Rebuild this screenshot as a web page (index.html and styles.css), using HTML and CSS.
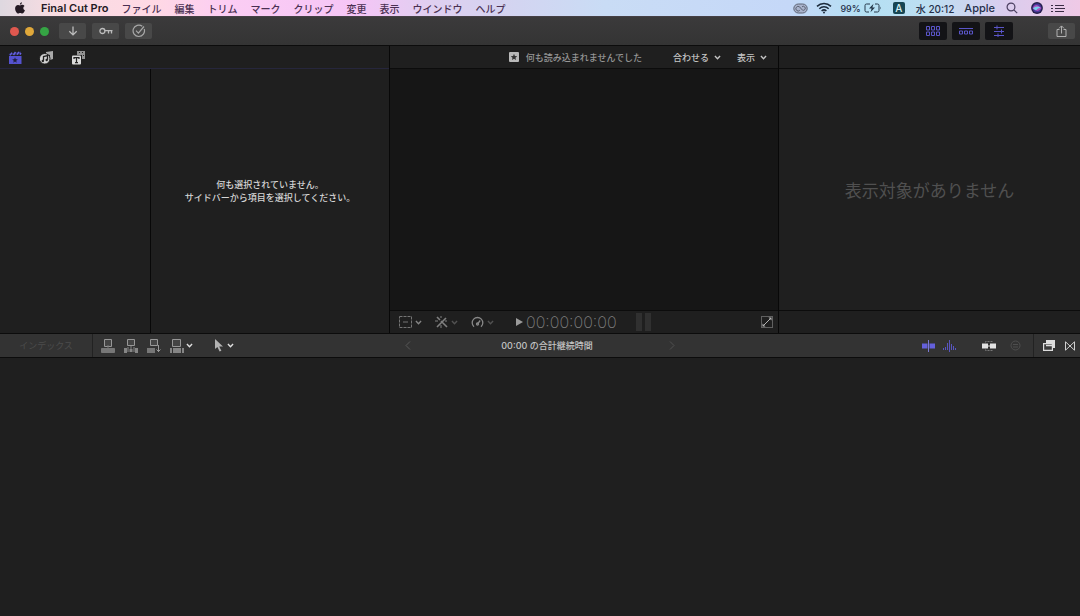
FILE: index.html
```html
<!DOCTYPE html>
<html lang="ja">
<head>
<meta charset="utf-8">
<title>Final Cut Pro</title>
<link rel="stylesheet" href="styles.css">
</head>
<body>
<svg class="defs" aria-hidden="true">
  <symbol id="chevron" viewBox="0 0 6 6"><path d="M.8 1.8 3 4.1 5.2 1.8" fill="none" stroke="currentColor" stroke-width="1.2"/></symbol>
  <symbol id="star" viewBox="0 0 10 10"><path d="M5 .5 6.3 3.6 9.7 3.9 7.1 6.1 7.9 9.4 5 7.6 2.1 9.4 2.9 6.1 .3 3.9 3.7 3.6Z"/></symbol>
</svg>

<header class="menubar">
  <nav class="menus">
    <button class="apple" aria-label="アップルメニュー"><svg width="10" height="12" viewBox="0 0 10 12"><path fill="#241a24" d="M6.9.2C7 1.500 6 2.600 4.900 2.600 4.800 1.400 5.800.4 6.900.2ZM5.100 3.400c.5 0 1.100-.6 2.200-.6.9 0 1.700.4 2.200 1.200C7.700 5.200 8 7.600 9.900 8.300 9.400 9.900 8.300 11.500 7.200 11.500c-.8 0-1.100-.5-2-.5s-1.300.5-2 .5C1.600 11.500.1 8.800.1 6.500c0-2.300 1.400-3.600 2.900-3.600.9 0 1.600.5 2.100.5Z"/></svg></button>
    <button class="app">Final Cut Pro</button>
    <button>ファイル</button>
    <button>編集</button>
    <button>トリム</button>
    <button>マーク</button>
    <button>クリップ</button>
    <button>変更</button>
    <button>表示</button>
    <button>ウインドウ</button>
    <button>ヘルプ</button>
  </nav>
  <div class="status">
    <svg width="15" height="11" viewBox="0 0 15 11" fill="none" stroke="#5d6475"><rect x=".8" y="1" width="13.400" height="9" rx="4.500" fill="#a9b3cc"/><path d="M6.800 7.300A2.300 2.300 0 1 1 6.500 3.800L9.400 7.100A2 2 0 1 0 9 3.800"/></svg>
    <svg class="wifi" width="16" height="12" viewBox="0 0 16 12" fill="none" stroke="#1c2b3c" stroke-width="1.500"><path d="M1 4.400C5 .5 11 .5 15 4.400M3.300 6.800c2.700-2.600 6.700-2.600 9.400 0M5.600 9c1.400-1.300 3.400-1.300 4.800 0"/><circle cx="8" cy="10.600" r="1" fill="#1c2b3c" stroke="none"/></svg>
    <span class="battery"><span>99%</span><svg width="18" height="10" viewBox="0 0 18 10"><path d="M6 1H2.500Q1 1 1 2.500v5Q1 9 2.500 9H5M11 1h2.500Q15 1 15 2.500v5Q15 9 13.500 9H10" fill="none" stroke="#26394a"/><path d="M16.200 3.500q1.400 1.500 0 3ZM9.500.8 5 5.600h2.600L6.500 9.300 11 4.400H8.400Z" fill="#26394a"/></svg></span>
    <span class="ime">A</span>
    <span class="clock">水 20:12</span>
    <span class="user">Apple</span>
    <svg class="search" width="12" height="12" viewBox="0 0 12 12" fill="none" stroke="#4a3f60" stroke-width="1.200"><circle cx="5" cy="5" r="3.900"/><path d="m7.800 7.800 3.400 3.400"/></svg>
    <svg class="siri" width="12" height="12" viewBox="0 0 12 12"><circle cx="6" cy="6" r="5.900" fill="#241d4a"/><circle cx="6" cy="6" r="4.500" fill="#493899"/><path d="M1.500 6Q4 1.500 7 3.500T10.500 6Q8 10 5 8.500T1.500 6Z" fill="#b04fc0"/><path d="M2 6.500Q5 3 9.500 5.500 6 6.500 5 8.500Z" fill="#77d0ee"/></svg>
    <svg class="list" width="14" height="9" viewBox="0 0 14 9" stroke="#3a2c44" stroke-width="1.200"><path d="M4 1.500h9M4 4.500h10M4 7.500h9M0 1.500h2M0 4.500h2M0 7.500h2"/></svg>
  </div>
</header>

<div class="toolbar">
  <div class="lights"><button class="close" aria-label="閉じる"></button><button class="minimize" aria-label="しまう"></button><button class="full" aria-label="拡大"></button></div>
  <div class="actions">
    <button class="tool" aria-label="読み込む"><svg width="10" height="10" viewBox="0 0 10 10" fill="none" stroke="#bcbcbc" stroke-width="1.300"><path d="M5 .5v8.300M1.300 5.200 5 8.900l3.700-3.700"/></svg></button>
    <button class="tool" aria-label="キーワード"><svg width="14" height="8" viewBox="0 0 14 8" fill="none" stroke="#bcbcbc" stroke-width="1.300"><circle cx="3.400" cy="4" r="2.500"/><path d="M6 3.600h7.500M9.500 4v2.500M12.500 4v2.500"/></svg></button>
    <button class="tool" aria-label="バックグラウンドタスク"><svg width="14" height="14" viewBox="0 0 14 14" fill="none" stroke="#a8a8a8" stroke-width="1.200"><path d="M12.200 5A5.700 5.700 0 1 1 10.300 2.300M4 6.700l2.400 2.400L12 2.500"/></svg></button>
  </div>
  <div class="views">
    <button class="tool on" aria-label="ブラウザ"><svg width="14" height="10" viewBox="0 0 14 10" fill="none" stroke="#5a55c8"><path d="M.5.5h3v3.500h-3ZM5.500.5h3v3.500h-3ZM10.500.5h3v3.500h-3ZM.5 6h3v3.500h-3ZM5.500 6h3v3.500h-3ZM10.500 6h3v3.500h-3Z"/></svg></button>
    <button class="tool on" aria-label="タイムライン"><svg width="14" height="8" viewBox="0 0 14 8" fill="none" stroke="#5a55c8"><path d="M0 1.500h14M.5 4h3v3h-3ZM5.500 4h3v3h-3ZM10.500 4h3v3h-3Z"/></svg></button>
    <button class="tool on" aria-label="インスペクタ"><svg width="12" height="12" viewBox="0 0 12 12" stroke="#5a55c8"><path d="M1 2.500h10M1 6.500h10M1 10.500h10M4 .5v4M8.500 4.500v4M5 8.500V12"/></svg></button>
  </div>
  <button class="tool share" aria-label="共有"><svg width="11" height="13" viewBox="0 0 11 13" fill="none" stroke="#b0b0b0"><path d="M3.500 4.500h-2.500v7h9v-7H7.500M5.500 8.500V1M3 3.400 5.500.9 8 3.400"/></svg></button>
</div>

<main class="workspace">
  <section class="browser">
    <div class="tabs panel-head">
      <button aria-label="ライブラリ"><svg width="14" height="15" viewBox="0 0 14 15"><path fill="#5552cf" d="M1 6h12.500v8H1Z"/><path d="m.8 3.800 12-2.300v3L1 5.300Z" fill="#302f70"/><path d="M2 5.400 4 2.700M5.500 5 7.500 2M9 4.700l2-2.900M12 4.500l1-1.500" stroke="#6764e0" stroke-width="1.400"/><svg x="4" y="7" width="6" height="6"><use href="#star" fill="#20203c"/></svg></svg></button>
      <button aria-label="写真とオーディオ"><svg width="15" height="15" viewBox="0 0 15 15"><path d="m7 2 7-1v8l-3 1V5L7 4Z" fill="#a9a9a9"/><circle cx="5.700" cy="8.800" r="5.300" fill="#d2d2d2" stroke="#202020"/><path d="M4.500 10.800V6.500L8.500 5.500v4.300" fill="none" stroke="#222" stroke-width="1.300"/><circle cx="3.800" cy="11" r="1.200" fill="#222"/><circle cx="7.700" cy="10" r="1.200" fill="#222"/></svg></button>
      <button aria-label="タイトルとジェネレータ"><svg width="15" height="15" viewBox="0 0 15 15"><path d="M6 1h8v8h-3V5H6Z" fill="#929292"/><path d="M8 2.500h1M11 2.500h1M12 5.500h1" stroke="#222" stroke-width="1.200"/><rect x="1" y="5.500" width="9" height="9" rx="1" fill="#dadada"/><path d="M3 9V7.600h5V9M5.500 7.600v5M4 12.600h3" fill="none" stroke="#222" stroke-width="1.200"/></svg></button>
    </div>
    <div class="browser-body">
      <aside class="sidebar"></aside>
      <p class="empty">何も選択されていません。<br>サイドバーから項目を選択してください。</p>
    </div>
  </section>

  <section class="viewer">
    <div class="viewer-head panel-head">
      <span class="clip-title"><svg width="10" height="10" viewBox="0 0 10 10"><rect width="10" height="10" rx="1" fill="#b9b9b9"/><svg x="1.500" y="1.500" width="7" height="7"><use href="#star" fill="#333"/></svg></svg>何も読み込まれませんでした</span>
      <button>合わせる<svg width="7" height="7"><use href="#chevron"/></svg></button>
      <button>表示<svg width="7" height="7"><use href="#chevron"/></svg></button>
    </div>
    <div class="canvas"></div>
    <div class="transport">
      <div class="effects">
        <button aria-label="変形"><svg width="13" height="12" viewBox="0 0 13 12" fill="none" stroke="#757575"><rect x=".5" y=".5" width="12" height="11" stroke-dasharray="3 1"/><path d="M4 6h5"/></svg><svg width="7" height="7"><use href="#chevron"/></svg></button>
        <button aria-label="補正"><svg width="13" height="12" viewBox="0 0 13 12" stroke="#808080"><path d="m2 1 3 3M6 5l6 6M11 2 2 11" stroke-width="1.600"/><path d="M0 5h3M6 0v2M10 5h2M6 9v3"/></svg><svg class="dim" width="7" height="7"><use href="#chevron"/></svg></button>
        <button aria-label="リタイミング"><svg width="13" height="12" viewBox="0 0 13 12" fill="none" stroke="#888" stroke-width="1.300"><path d="M3 10.800A5.300 5.300 0 1 1 10 10.800M6.500 8 9.200 4.500"/><circle cx="6.500" cy="8" r="1"/></svg><svg class="dim" width="7" height="7"><use href="#chevron"/></svg></button>
      </div>
      <button class="play" aria-label="再生"><svg width="7" height="8" viewBox="0 0 7 8"><path d="M0 0 7 4 0 8Z" fill="#9b9b9b"/></svg></button>
      <span class="timecode">00:00:00:00</span>
      <span class="meters"><i></i><i></i></span>
      <button class="expand" aria-label="フルスクリーン"><svg width="12" height="12" viewBox="0 0 12 12" fill="none"><rect x=".5" y=".5" width="11" height="11" stroke="#606060"/><path d="m2.500 9.500 7-7" stroke="#b5b5b5"/><path d="M7.500 1.500h3v3ZM1.500 7.500v3h3Z" fill="#b5b5b5"/></svg></button>
    </div>
  </section>

  <section class="inspector">
    <div class="panel-head"></div>
    <p class="none">表示対象がありません</p>
    <div class="inspector-foot"></div>
  </section>
</main>

<div class="timeline-bar">
  <div class="bar-left">
    <button class="index" disabled>インデックス</button>
    <div class="edit-tools">
      <button aria-label="接続"><svg width="14" height="14" viewBox="0 0 14 14"><path d="M3.500.5h7v7h-7Z" fill="#444" stroke="#979797"/><path d="M7 6v3M.5 9.500h13v4H.5Z" fill="#777" stroke="#777"/></svg></button>
      <button aria-label="挿入"><svg width="14" height="14" viewBox="0 0 14 14"><path d="M3.500.5h7v6h-7Z" fill="#444" stroke="#979797"/><path d="M0 9h3v5H0ZM5.500 10h3v3h-3ZM11 9h3v5h-3Z" fill="#858585"/><path d="M4 8v5M10 8v5M7 7v6" stroke="#888"/></svg></button>
      <button aria-label="追加"><svg width="14" height="14" viewBox="0 0 14 14"><path d="M3.500.5h7v6h-7Z" fill="#444" stroke="#979797"/><path d="M0 9h8v5H0Z" fill="#777"/><path d="M11.500 6v7M9.500 10.500l2 2 2-2" fill="none" stroke="#999"/></svg></button>
      <button aria-label="上書き"><svg width="14" height="14" viewBox="0 0 14 14"><path d="M2.500.5h8v7h-8Z" fill="#444" stroke="#979797"/><path d="M0 9h2v5H0ZM3 9h8v5H3ZM12 9h2v5h-2Z" fill="#858585"/></svg><svg class="bright" width="7" height="7"><use href="#chevron"/></svg></button>
      <button class="pointer" aria-label="選択ツール"><svg width="9" height="13" viewBox="0 0 9 13"><path d="M1 0v10l2.400-2 2.200 4.600 1.800-.9-2.200-4.300H9Z" fill="#b2b2b2"/></svg><svg class="bright" width="7" height="7"><use href="#chevron"/></svg></button>
    </div>
  </div>
  <div class="duration">
    <button aria-label="戻る" disabled><svg width="6" height="9" viewBox="0 0 6 9" fill="none" stroke="#595959"><path d="M5 .5 1 4.500l4 4"/></svg></button>
    <span>00:00 の合計継続時間</span>
    <button aria-label="進む" disabled><svg width="6" height="9" viewBox="0 0 6 9" fill="none" stroke="#505050"><path d="m1 .5 4 4-4 4"/></svg></button>
  </div>
  <div class="bar-right">
    <div class="timeline-options">
      <button aria-label="スキミング"><svg width="13" height="12" viewBox="0 0 13 12"><path d="M0 3.500h5.500v5H0ZM7.500 3.500H13v5H7.500Z" fill="#6460dc"/><path d="M6.500 0v12" stroke="#7c79d8"/></svg></button>
      <button aria-label="オーディオスキミング"><svg width="13" height="12" viewBox="0 0 13 12" stroke="#5855c0"><path d="M.5 8v2M2.500 7v3M4.500 3v7M6.500 0v12M8.500 4v6M10.500 6v4M12.500 8v2"/></svg></button>
      <button class="solo" aria-label="ソロ"><svg width="14" height="12" viewBox="0 0 14 12"><path d="M3.500 2.500v-1h7v1M3.500 9.500v1h7v-1" fill="none" stroke="#777" stroke-dasharray="2 1"/><path d="M0 3.500h6v5H0ZM8 3.500h6v5H8Z" fill="#e2e2e2"/><path d="M6 6h2" stroke="#ddd"/></svg></button>
      <button aria-label="スナップ"><svg width="11" height="11" viewBox="0 0 11 11" fill="none" stroke="#4e4e4e"><circle cx="5.500" cy="5.500" r="4.500"/><path d="M3 4.500h5M3 7h5"/></svg></button>
    </div>
    <div class="effect-browsers">
      <button aria-label="エフェクト"><svg width="12" height="11" viewBox="0 0 12 11"><path d="M3 0h9v8h-2V3H3Z" fill="#ddd"/><path d="M.6 3.600h8.800v6.800H.6Z" fill="#3a3a3a" stroke="#ddd" stroke-width="1.200"/><path d="M3 5.500h7" stroke="#ddd" stroke-width="1.500"/></svg></button>
      <button aria-label="トランジション"><svg width="10" height="10" viewBox="0 0 10 10" fill="none" stroke="#cfcfcf"><path d="M.5.8v8.400L9.500.8v8.400Z"/></svg></button>
    </div>
  </div>
</div>
<section class="timeline" aria-label="タイムライン"></section>
</body>
</html>
```

FILE: styles.css
```css
* { box-sizing: border-box; }
body {
  margin: 0;
  min-height: 100vh;
  display: flex;
  flex-direction: column;
  background: #1f1f1f;
  color: #bdbdbd;
  font-family: Inter, "Noto Sans CJK JP", sans-serif;
  font-size: 9px;
}
button {
  display: flex;
  align-items: center;
  padding: 0;
  border: 0;
  background: none;
  color: inherit;
  font: inherit;
  white-space: nowrap;
}
p { margin: 0; }
svg { display: block; flex: none; }
.defs { position: absolute; width: 0; height: 0; }

.menubar {
  height: 16px;
  display: flex;
  justify-content: space-between;
  align-items: center;
  padding: 0 15px;
  background: linear-gradient(90deg, #ded8e0 0%, #f8dce2 5%, #ffd9e4 14%, #fbcdf3 21%, #f5c5f6 33%, #dfcff0 40%, #d5d3f0 46%, #c9dcf5 56%, #c5d8f8 73%, #b4e0f3 80%, #bddff2 86%, #dacdee 93%, #efc9e6 100%);
  color: #4a3052;
  font-size: 10px;
  font-weight: 500;
}
.menus { display: flex; align-items: center; gap: 13px; }
.apple { margin-right: 3px; }
.app { font-size: 11px; font-weight: 600; color: #241a24; }
.status { display: flex; align-items: center; gap: 8px; color: #26304a; }
.battery { display: flex; align-items: center; gap: 3px; font-size: 9px; }
.ime {
  width: 12px;
  height: 12px;
  margin: 0 3px;
  border-radius: 2px;
  background: #174653;
  color: #d8f2f5;
  text-align: center;
  line-height: 12px;
}
.user { margin: 0 3px 0 2px; font-size: 11px; }
.siri { margin-left: 5px; }

.toolbar {
  height: 30px;
  display: flex;
  align-items: center;
  padding: 0 5px 0 10px;
  background: linear-gradient(#3b3a3b, #343434);
  border-top: 1px solid #454045;
  border-bottom: 1px solid #0c0c0c;
}
.lights { display: flex; gap: 6px; }
.lights button { width: 9px; height: 9px; border-radius: 50%; }
.close { background: #df584f; }
.minimize { background: #e0a83a; }
.full { background: #35a444; }
.actions { display: flex; gap: 6px; margin-left: 10px; }
.tool {
  width: 27px;
  height: 16px;
  justify-content: center;
  border-radius: 2px;
  background: #484848;
}
.views { display: flex; gap: 5px; margin-left: auto; }
.tool.on { width: 28px; height: 18px; background: #131316; }
.share { margin-left: 35px; }

.workspace {
  height: 288px;
  display: grid;
  grid-template-columns: 390fr 389fr 301fr;
  border-bottom: 1px solid #0c0c0c;
}
.workspace > section { display: flex; flex-direction: column; min-width: 0; }
.browser, .viewer { border-right: 1px solid #080808; }
.panel-head {
  height: 23px;
  display: flex;
  align-items: center;
  border-bottom: 1px solid #0c0c0c;
}
.browser .panel-head { gap: 17px; padding-left: 8px; border-color: #26263c; }
.browser-body { flex: 1; display: flex; }
.sidebar { width: 151px; border-right: 1px solid #080808; }
.empty {
  flex: 1;
  padding-top: 109px;
  text-align: center;
  line-height: 13px;
  font-weight: 500;
  color: #d5d5d5;
}
.viewer-head { justify-content: flex-end; gap: 16px; padding-right: 11px; font-weight: 500; }
.viewer-head button { gap: 5px; color: #c4c4c4; }
.clip-title { display: flex; align-items: center; gap: 7px; margin-right: 15px; color: #969696; }
.canvas { flex: 1; background: #161616; }
.transport {
  height: 23px;
  display: flex;
  align-items: center;
  padding: 0 11px 0 9px;
  border-top: 1px solid #0c0c0c;
}
.transport .expand { margin: 0 -6px 0 auto; }
.effects { display: flex; gap: 13px; color: #858585; }
.effects button { gap: 3px; }
.dim { opacity: .5; }
.play { margin-left: 22px; }
.timecode { margin-left: 3px; font-size: 16px; font-weight: 200; color: #808080; }
.meters { display: flex; gap: 3px; margin-left: 19px; }
.meters i { width: 6px; height: 18px; background: #303030; }
.none {
  flex: 1;
  display: flex;
  align-items: center;
  justify-content: center;
  font-size: 17px;
  color: #505050;
}
.inspector-foot { height: 23px; border-top: 1px solid #0c0c0c; }

.timeline-bar {
  height: 24px;
  display: grid;
  grid-template-columns: 1fr auto 1fr;
  align-items: stretch;
  background: #333;
  border-bottom: 1px solid #0c0c0c;
}
.bar-left, .bar-right { display: flex; align-items: stretch; }
.bar-right { justify-content: flex-end; }
.index {
  width: 93px;
  justify-content: center;
  border-right: 1px solid #222;
  color: #4c4c4c;
}
.edit-tools { display: flex; align-items: center; gap: 9px; padding-left: 8px; }
.edit-tools button { gap: 2px; }
.bright { color: #e0e0e0; }
.edit-tools .pointer { margin-left: 12px; gap: 4px; }
.duration {
  width: 270px;
  display: flex;
  align-items: center;
  justify-content: space-between;
  font-weight: 500;
  color: #c4c4c4;
}
.duration span { padding-left: 14px; }
.timeline-options { display: flex; align-items: center; gap: 8px; padding-right: 12px; }
.solo { margin: 0 6px 0 18px; }
.effect-browsers {
  width: 47px;
  display: flex;
  align-items: center;
  gap: 10px;
  padding-left: 9px;
  border-left: 1px solid #222;
}
.timeline { flex: 1; background: #1f1f1f; }
```
